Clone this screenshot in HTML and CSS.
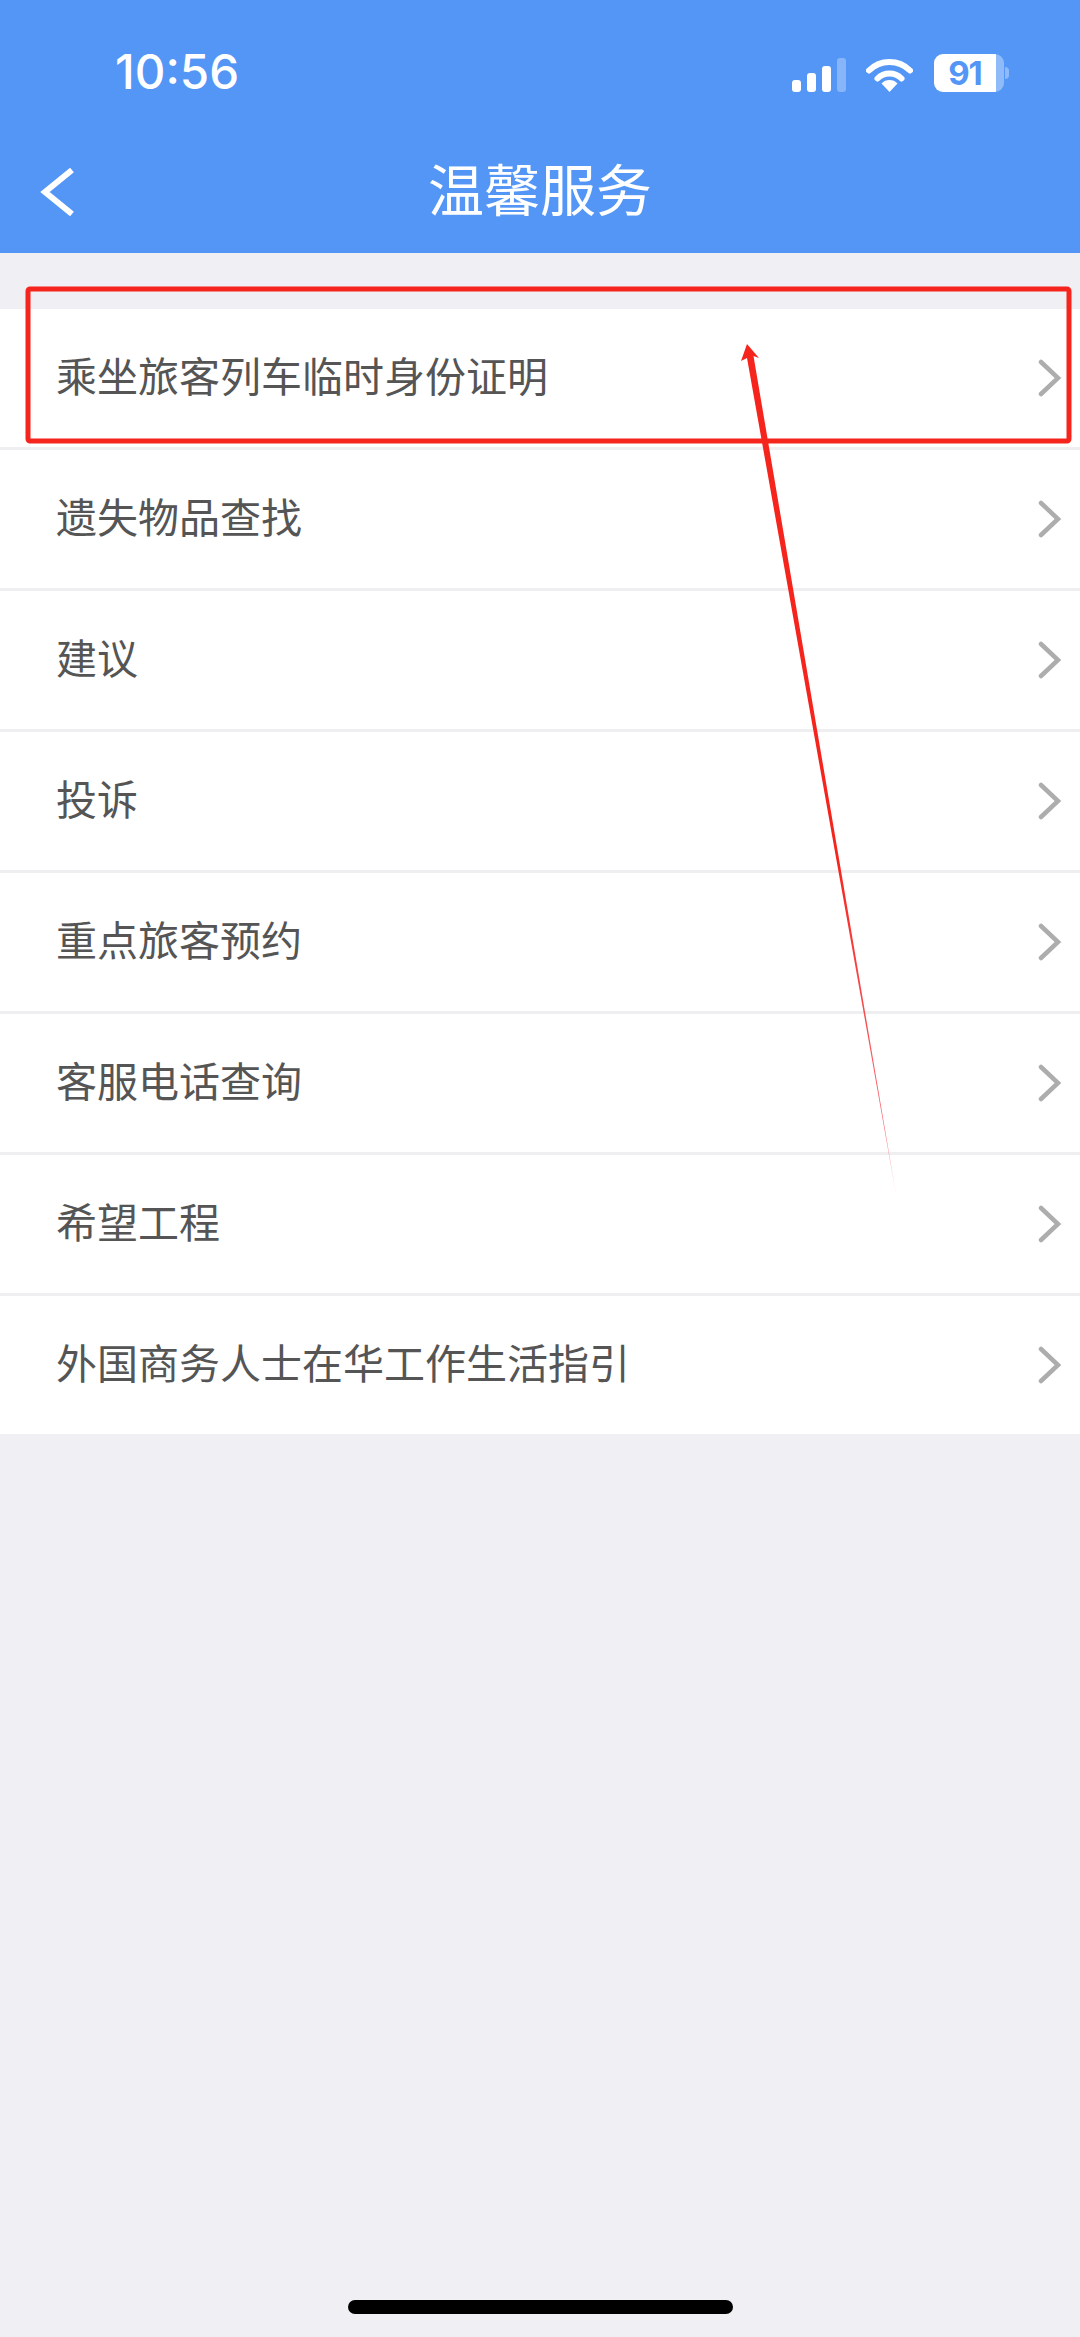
FILE: index.html
```html
<!DOCTYPE html>
<html lang="zh-CN">
  <head>
    <meta charset="UTF-8" />
    <meta name="viewport" content="width=device-width, initial-scale=1.0" />
    <title>温馨服务</title>
    <link rel="stylesheet" href="styles.css">
  </head>
  <body>
    <div class="page">
      <header class="header">
        <div class="status-bar">
          <span class="time">10:56</span>
          <div class="status-icons">
            <div class="signal">
              <i class="bar bar-1"></i>
              <i class="bar bar-2"></i>
              <i class="bar bar-3"></i>
              <i class="bar bar-4"></i>
            </div>
            <svg class="wifi" width="47" height="35" viewBox="0 0 47 35">
              <path d="M3 13.5 A29 29 0 0 1 44 13.5" fill="none" stroke="#fff" stroke-width="6" stroke-linecap="round" />
              <path d="M11.5 21.5 A17 17 0 0 1 35.5 21.5" fill="none" stroke="#fff" stroke-width="6" stroke-linecap="round" />
              <path d="M15.5 26.5 A11 11 0 0 1 31.5 26.5 L23.5 35 z" fill="#fff" />
            </svg>
            <div class="battery">
              <div class="battery-body">
                <span class="battery-num">91</span>
              </div>
              <i class="battery-nub"></i>
            </div>
          </div>
        </div>
        <div class="nav">
          <svg class="back" width="36" height="50" viewBox="0 0 36 50">
            <path d="M32 3 L5 25 L32 47" fill="none" stroke="#fff" stroke-width="6" />
          </svg>
          <h1 class="title">温馨服务</h1>
        </div>
      </header>

      <ul class="list">
        <li class="row"><span>乘坐旅客列车临时身份证明</span><svg class="chevron" width="24" height="38" viewBox="0 0 24 38"><path d="M3 3 L20 19 L3 35" /></svg></li>
        <li class="row"><span>遗失物品查找</span><svg class="chevron" width="24" height="38" viewBox="0 0 24 38"><path d="M3 3 L20 19 L3 35" /></svg></li>
        <li class="row"><span>建议</span><svg class="chevron" width="24" height="38" viewBox="0 0 24 38"><path d="M3 3 L20 19 L3 35" /></svg></li>
        <li class="row"><span>投诉</span><svg class="chevron" width="24" height="38" viewBox="0 0 24 38"><path d="M3 3 L20 19 L3 35" /></svg></li>
        <li class="row"><span>重点旅客预约</span><svg class="chevron" width="24" height="38" viewBox="0 0 24 38"><path d="M3 3 L20 19 L3 35" /></svg></li>
        <li class="row"><span>客服电话查询</span><svg class="chevron" width="24" height="38" viewBox="0 0 24 38"><path d="M3 3 L20 19 L3 35" /></svg></li>
        <li class="row"><span>希望工程</span><svg class="chevron" width="24" height="38" viewBox="0 0 24 38"><path d="M3 3 L20 19 L3 35" /></svg></li>
        <li class="row"><span>外国商务人士在华工作生活指引</span><svg class="chevron" width="24" height="38" viewBox="0 0 24 38"><path d="M3 3 L20 19 L3 35" /></svg></li>
      </ul>

      <div class="home-bar"></div>

      <!-- red markup drawn over the screenshot -->
      <svg class="markup" width="1080" height="2337" viewBox="0 0 1080 2337">
        <defs>
          <linearGradient id="fade" gradientUnits="userSpaceOnUse" x1="747" y1="344" x2="897" y2="1200">
            <stop offset="0" stop-color="#f5241c" />
            <stop offset="0.6" stop-color="#f5241c" />
            <stop offset="0.92" stop-color="#f5505a" stop-opacity="0.85" />
            <stop offset="1" stop-color="#f5505a" stop-opacity="0.3" />
          </linearGradient>
        </defs>
        <rect x="28" y="289" width="1041" height="152" rx="2" fill="none" stroke="#f5241c" stroke-width="5" />
        <polygon points="747,344 759,358 753.5,356 897,1200 747,358 741,361" fill="url(#fade)" />
      </svg>
    </div>
  </body>
</html>
```

FILE: styles.css
```css
* {
  box-sizing: border-box;
}
body {
  margin: 0;
  background-color: #efeff4;
  font-family: "Noto Sans CJK SC", "Liberation Sans", sans-serif;
}
.page {
  position: relative;
  width: 1080px;
  height: 2337px;
  display: flex;
  flex-direction: column;
  overflow: hidden;
}
.header {
  height: 253px;
  background-color: #5396f6;
  color: #fff;
}
.status-bar {
  height: 145px;
  padding: 47px 71px 0 115px;
  display: flex;
  justify-content: space-between;
  align-items: flex-start;
}
.time {
  font-family: Inter, "Liberation Sans", sans-serif;
  font-size: 47.5px;
  font-weight: 500;
  line-height: 50px;
}
.status-icons {
  display: flex;
  align-items: flex-end;
  padding-top: 7px;
}
.signal {
  display: flex;
  align-items: flex-end;
  gap: 6px;
  height: 34px;
  margin-right: 20px;
}
.bar {
  display: block;
  width: 9px;
  background-color: #fff;
  border-radius: 3px;
}
.bar-1 {
  height: 12px;
}
.bar-2 {
  height: 19px;
}
.bar-3 {
  height: 26px;
}
.bar-4 {
  height: 34px;
  background-color: rgba(255, 255, 255, 0.3);
}
.wifi {
  margin-right: 21px;
}
.battery {
  display: flex;
  align-items: center;
}
.battery-body {
  width: 70px;
  height: 38px;
  border-radius: 9px;
  background: linear-gradient(90deg, #fff 88%, rgba(255, 255, 255, 0.35) 88%);
  color: #5396f6;
  text-align: center;
  padding-right: 8px;
}
.battery-num {
  font-family: Inter, "Liberation Sans", sans-serif;
  font-size: 33px;
  font-weight: 700;
  letter-spacing: -1px;
  line-height: 38px;
  display: block;
}
.battery-nub {
  display: block;
  width: 4px;
  height: 12px;
  margin-left: 1px;
  background-color: rgba(255, 255, 255, 0.35);
  border-radius: 0 6px 6px 0;
}
.nav {
  position: relative;
  display: flex;
  justify-content: center;
}
.back {
  position: absolute;
  left: 40px;
  top: 22px;
}
.title {
  margin: 9px 0 0;
  font-size: 56px;
  font-weight: 400;
  line-height: 66px;
}
.list {
  list-style: none;
  margin: 56px 0 0;
  padding: 0;
  height: 1125px;
  display: grid;
  grid-template-rows: repeat(7, 141px) 138px;
  background-color: #fff;
}
.row {
  display: flex;
  align-items: center;
  justify-content: space-between;
  padding: 0 18px 0 56px;
  font-size: 41px;
  color: #555;
  border-bottom: 3px solid #efeff1;
}
.row span {
  padding-bottom: 8px;
}
.row:last-child {
  border-bottom: none;
}
.chevron path {
  fill: none;
  stroke: #adadad;
  stroke-width: 4.5;
  stroke-linecap: round;
}
.home-bar {
  width: 385px;
  height: 14px;
  margin: auto auto 23px;
  background-color: #000;
  border-radius: 7px;
}
.markup {
  position: absolute;
  left: 0;
  top: 0;
  pointer-events: none;
}
```
